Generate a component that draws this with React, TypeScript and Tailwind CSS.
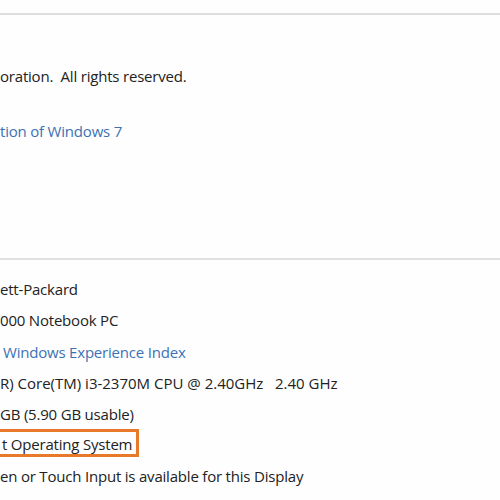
import React from "react";

const Row = ({ children, link = false }: { children: React.ReactNode; link?: boolean }) => (
  <div
    className={`h-[31px] leading-[31px] whitespace-pre text-[15px] tracking-[-0.2px] ${link ? "text-[#3b72b5]" : "text-[#222222]"}`}
  >
    {children}
  </div>
);

export default function App() {
  return (
    <div
      className="w-[500px] h-[500px] overflow-hidden bg-[#fefefe] flex flex-col"
      style={{ fontFamily: '"Open Sans", "Noto Sans", sans-serif' }}
    >
      <div className="h-[13px] shrink-0" />
      <div className="h-[2px] shrink-0 bg-[#dedede]" />
      <div className="h-[46px] shrink-0" />
      <Row>oration.  All rights reserved.</Row>
      <div className="h-[24px] shrink-0" />
      <Row link>tion of Windows 7</Row>
      <div className="h-[111px] shrink-0" />
      <div className="h-[2px] shrink-0 bg-[#e0e0e0]" />
      <div className="h-[14px] shrink-0" />
      <Row>ett-Packard</Row>
      <Row>000 Notebook PC</Row>
      <div className="h-[32px] leading-[32px] whitespace-pre text-[15px] tracking-[-0.2px] text-[#3b72b5]">
        <span className="pl-[3px]">Windows Experience Index</span>
      </div>
      <div className="h-[31px] leading-[31px] whitespace-pre text-[15px] text-[#222222]">
        R) Core(TM) i3-2370M CPU @ 2.40GHz   2.40 GHz
      </div>
      <div className="h-[30px] leading-[30px] whitespace-pre text-[15px] tracking-[-0.2px] text-[#222222]">
        GB (5.90 GB usable)
      </div>
      <div className="relative h-[32px] leading-[31px] whitespace-pre text-[15px] tracking-[-0.2px] text-[#222222]">
        <span className="absolute left-[-10px] top-[0px] w-[149px] h-[28px] border-[3px] border-[#e8792b]" />
        <span className="relative pl-[2px]">t Operating System</span>
      </div>
      <Row>en or Touch Input is available for this Display</Row>
    </div>
  );
}
